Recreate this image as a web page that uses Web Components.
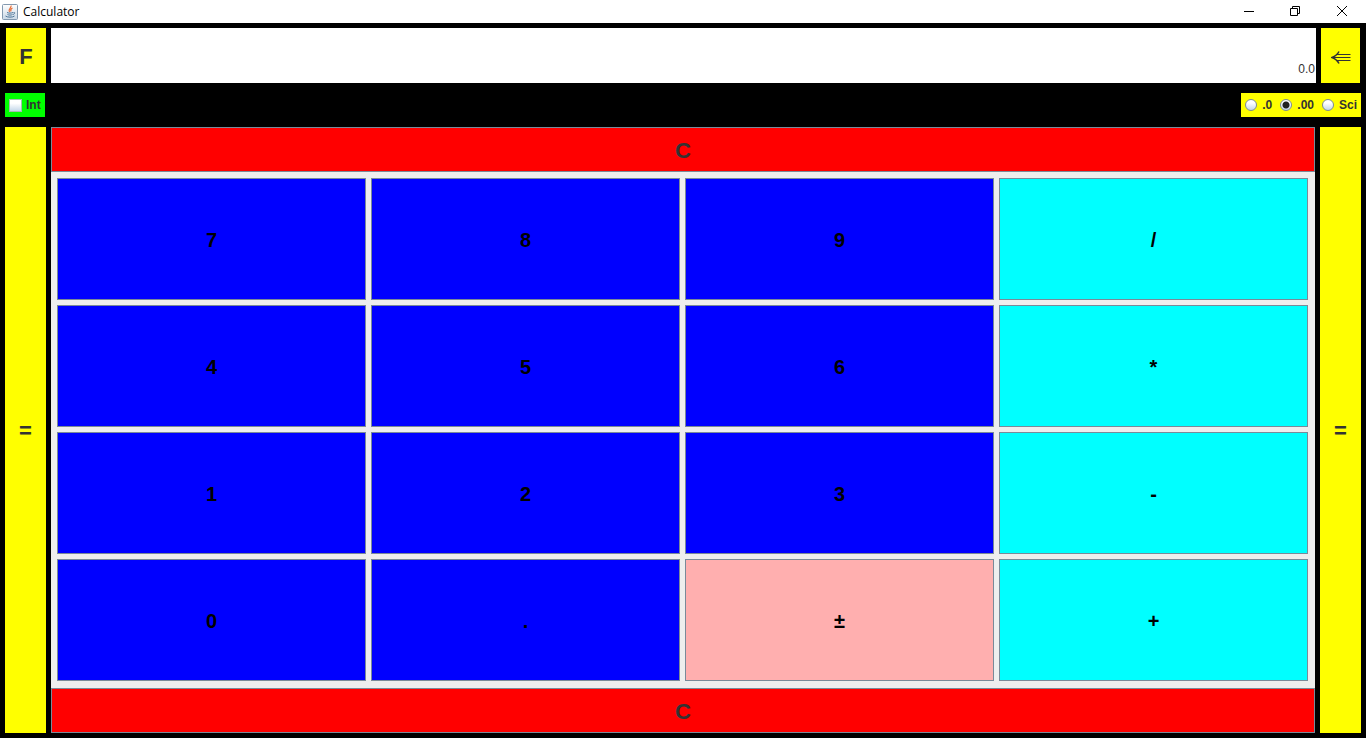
<!DOCTYPE html>
<html lang="en">
<head>
<meta charset="utf-8">
<title>Calculator</title>
<style>
  html, body { margin: 0; height: 100%; }
  body { font-family: "Liberation Sans", Arial, sans-serif; color: #333; background: #000; }
</style>
</head>
<body>
<calc-window></calc-window>
<script>
const define = (name, html, setup) => {
  const template = document.createElement('template');
  template.innerHTML = html;
  customElements.define(name, class extends HTMLElement {
    constructor() {
      super();
      this.attachShadow({ mode: 'open' }).append(template.content.cloneNode(true));
    }
    connectedCallback() { if (setup) setup(this, this.shadowRoot); }
  });
};

define('title-bar', `
<style>
  :host { display: flex; align-items: center; height: 23px; background: #fff; color: #000;
    font: 12px/23px "Open Sans", "Noto Sans", sans-serif; }
  .logo { width: 16px; height: 16px; margin: 0 5px 0 2px; }
  .name { flex: 1; }
  .win { display: flex; }
  button { width: 46px; height: 23px; padding: 0; border: 0; background: none; display: grid; place-items: center; }
  .win svg { width: 12px; height: 12px; fill: none; stroke: #000; stroke-width: 1; padding-bottom: 2px; }
  button:last-child { width: 48px; }
</style>
<svg class="logo" viewBox="0 0 16 16" aria-hidden="true">
  <defs><linearGradient id="g" x2="0" y2="1"><stop stop-color="#fff"/><stop offset="1" stop-color="#c9d8e6"/></linearGradient></defs>
  <rect x=".5" y=".5" width="15" height="15" rx="1" fill="url(#g)" stroke="#8399af"/>
  <path d="M9 1.5C10 4 5.5 4.500 7.500 8M10.500 4C8 5 8.500 6 9 7.500" fill="none" stroke="#e8703a" stroke-width="1.200"/>
  <path d="M5 8.500c1.500.8 4.500.8 6 0M5.500 10.500c1.500.8 3.500.8 5 0M3.500 12c1.500 1.500 7.500 1.500 9 0M11.500 8.500c2-.5 1.500 1.500-.5 2" fill="none" stroke="#4f7698"/>
</svg>
<span class="name"><slot></slot></span>
<div class="win">
  <button aria-label="Minimize"><svg viewBox="0 0 12 12"><path d="M1 6.500h10"/></svg></button>
  <button aria-label="Restore"><svg viewBox="0 0 12 12"><path d="M1.500 3.500h7v7h-7zM3.500 3.500v-2h7v7h-2"/></svg></button>
  <button aria-label="Close"><svg viewBox="0 0 12 12"><path d="M1 1l10 10M11 1L1 11"/></svg></button>
</div>`);

define('calc-key', `
<style>
  :host { display: grid; --bg: #ff0; --edge: var(--bg); }
  button { min-width: 0; margin: 0; padding: 2px 0 0; border: 1px solid var(--edge); background: var(--bg);
    color: inherit; font: inherit; }
  :host([tone]) { --edge: #7a8a99; }
  :host([tone=digit]) { --bg: #00f; }
  :host([tone=op]) { --bg: #0ff; }
  :host([tone=sign]) { --bg: #ffafaf; }
  :host([tone=clear]) { --bg: #f00; }
</style>
<button type="button"><slot></slot></button>`);

define('calc-display', `
<style>
  :host { display: grid; }
  input { min-width: 0; width: 100%; box-sizing: border-box; border: 0; padding: 27px 1px 0 0; margin: 0;
    background: #fff; color: #333; font: 12px/28px "Liberation Sans", Arial, sans-serif; text-align: right; border-radius: 0; }
</style>
<input type="text" value="0.0" aria-label="Result" readonly>`);

define('mode-bar', `
<style>
  :host { display: flex; justify-content: space-between; font: bold 12px/24px "Liberation Sans", Arial, sans-serif; }
  label { display: flex; align-items: center; }
  .int { background: #0f0; padding: 0 4px; gap: 4px; }
  .format { display: flex; gap: 8px; background: #ff0; padding: 0 4px; }
  .format label { gap: 5px; }
  input { appearance: none; margin: 0; box-sizing: border-box; border: 1px solid #7a8a99;
    background: linear-gradient(#fff 30%, #c4d7e9); }
  input[type=checkbox] { width: 13px; height: 13px; border-color: #a5bdb0; }
  input[type=radio] { width: 12px; height: 12px; border-radius: 50%; }
  input[type=radio]:checked { background: radial-gradient(circle, #222 3px, transparent 4px), linear-gradient(#fff 30%, #c4d7e9); }
</style>
<label class="int"><input type="checkbox">Int</label>
<div class="format" role="radiogroup" aria-label="Number format">
  <label><input type="radio" name="format">.0</label>
  <label><input type="radio" name="format" checked>.00</label>
  <label><input type="radio" name="format">Sci</label>
</div>`);

define('key-pad', `
<style>
  :host { display: grid; grid-template: repeat(4, 1fr) / repeat(4, 1fr); gap: 5px; padding: 6px 7px 7px 6px;
    background: #eee; color: #000; font-size: 20px; font-weight: bold; }
</style>
<slot></slot>`, host => {
  for (const k of ['7','8','9','/','4','5','6','*','1','2','3','-','0','.','±','+']) {
    const key = document.createElement('calc-key');
    key.setAttribute('tone', '/*-+'.includes(k) ? 'op' : k === '±' ? 'sign' : 'digit');
    key.textContent = k;
    host.append(key);
  }
});

define('calc-window', `
<style>
  :host { display: flex; flex-direction: column; min-height: 100vh; background: #000; font-size: 22px; font-weight: bold; }
  .top { display: grid; grid-template-columns: 40px 1fr 39px; gap: 5px; height: 55px; margin: 5px 6px 10px; }
  mode-bar { margin: 0 5px 10px; }
  .main { flex: 1; display: grid; grid-template-columns: 41px 1fr 41px; gap: 5px; margin: 0 5px 5px; }
  .center { display: grid; grid-template-rows: 45px 1fr 45px; }
  .back svg { display: block; margin: auto; width: 20px; height: 14px; fill: none; stroke: #333; }
</style>
<title-bar>Calculator</title-bar>
<div class="top">
  <calc-key>F</calc-key>
  <calc-display></calc-display>
  <calc-key class="back"><svg viewBox="0 0 20 14" role="img" aria-label="Backspace"><path d="M5 4.500h14.500M2 7.500h17.500M5 10.500h14.500" stroke-width="1.100"/><path d="M8 1.500Q6 5.500 1 7.500Q6 9.500 8 13.500" stroke-width="1.500"/></svg></calc-key>
</div>
<mode-bar></mode-bar>
<div class="main">
  <calc-key>=</calc-key>
  <div class="center">
    <calc-key tone="clear">C</calc-key>
    <key-pad></key-pad>
    <calc-key tone="clear">C</calc-key>
  </div>
  <calc-key>=</calc-key>
</div>`);
</script>
</body>
</html>
